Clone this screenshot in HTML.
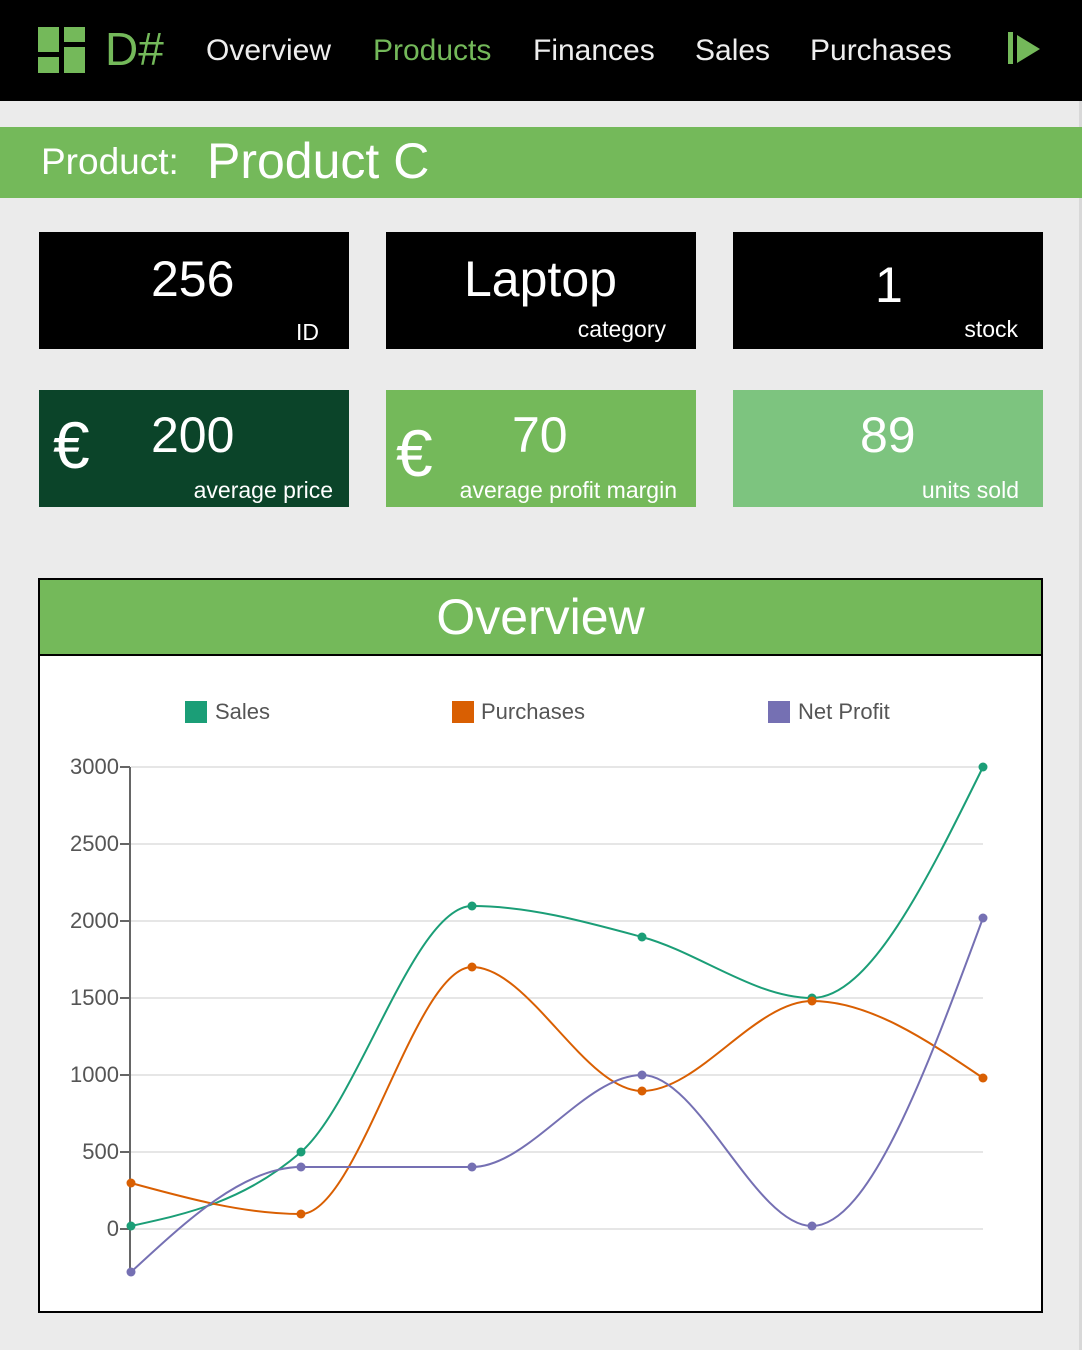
<!DOCTYPE html>
<html><head><meta charset="utf-8"><style>
*{margin:0;padding:0;box-sizing:border-box}
body{width:1082px;height:1350px;background:#ebebeb;font-family:"Liberation Sans",sans-serif;position:relative;overflow:hidden;border-right:3px solid #d8d8d8}
.a{position:absolute}
.nav{left:0;top:0;width:1082px;height:101px;background:#000}
.nl{top:34px;font-size:30px;color:#eee}
.card{position:absolute;width:310px;height:117px;color:#fff}
.v{position:absolute;font-size:50px;line-height:1}
.l{position:absolute;font-size:23px;right:30px;line-height:1}
.eu{position:absolute;left:14px;top:22px;font-size:66px;line-height:1}
</style></head><body>
<div class="a nav"></div>
<div class="a" style="left:38px;top:27px;width:21px;height:25px;background:#74b95a"></div>
<div class="a" style="left:38px;top:57px;width:21px;height:16px;background:#74b95a"></div>
<div class="a" style="left:64px;top:27px;width:21px;height:15px;background:#74b95a"></div>
<div class="a" style="left:64px;top:47px;width:21px;height:26px;background:#74b95a"></div>
<div class="a" style="left:105px;top:26px;font-size:46px;color:#74b95a;line-height:1">D#</div>
<div class="a nl" style="left:206px">Overview</div>
<div class="a nl" style="left:373px;color:#74b95a">Products</div>
<div class="a nl" style="left:533px">Finances</div>
<div class="a nl" style="left:695px">Sales</div>
<div class="a nl" style="left:810px">Purchases</div>
<div class="a" style="left:1008px;top:32px;width:5px;height:32px;background:#74b95a"></div>
<svg class="a" style="left:1017px;top:35px" width="24" height="29"><polygon points="0,0 23,14 0,28" fill="#74b95a"/></svg>
<div class="a" style="left:0;top:127px;width:1082px;height:71px;background:#74b95a"></div>
<div class="a" style="left:41px;top:143px;font-size:37px;color:#fff;line-height:1">Product:</div>
<div class="a" style="left:207px;top:136px;font-size:50px;color:#fff;line-height:1">Product C</div>

<div class="card" style="left:39px;top:232px;background:#000"><div class="v" style="left:112px;top:22px">256</div><div class="l" style="top:89px">ID</div></div>
<div class="card" style="left:386px;top:232px;background:#000"><div class="v" style="left:78px;top:22px">Laptop</div><div class="l" style="top:86px">category</div></div>
<div class="card" style="left:733px;top:232px;background:#000"><div class="v" style="left:142px;top:28px">1</div><div class="l" style="right:25px;top:86px">stock</div></div>

<div class="card" style="left:39px;top:390px;background:#0b4429"><div class="eu">€</div><div class="v" style="left:112px;top:20px">200</div><div class="l" style="right:16px;top:89px">average price</div></div>
<div class="card" style="left:386px;top:390px;background:#74b95a"><div class="eu" style="left:10px;top:30px">€</div><div class="v" style="left:126px;top:20px">70</div><div class="l" style="right:19px;top:89px">average profit margin</div></div>
<div class="card" style="left:733px;top:390px;background:#7dc47f"><div class="v" style="left:127px;top:20px">89</div><div class="l" style="right:24px;top:89px">units sold</div></div>

<div class="a" style="left:38px;top:578px;width:1005px;height:735px;background:#fff;border:2px solid #000"></div>
<div class="a" style="left:40px;top:580px;width:1001px;height:76px;background:#74b95a;border-bottom:2px solid #000;color:#fff;font-size:50px;text-align:center;line-height:74px">Overview</div>

<svg class="a" style="left:0;top:0" width="1082" height="1350" font-family="Liberation Sans, sans-serif">
<rect x="185" y="701" width="22" height="22" fill="#1b9e77"/><text x="215" y="719" font-size="22" fill="#555">Sales</text>
<rect x="452" y="701" width="22" height="22" fill="#d95f02"/><text x="481" y="719" font-size="22" fill="#555">Purchases</text>
<rect x="768" y="701" width="22" height="22" fill="#7570b3"/><text x="798" y="719" font-size="22" fill="#555">Net Profit</text>
<g stroke="#e6e6e6" stroke-width="2">
<line x1="131" y1="767" x2="983" y2="767"/><line x1="131" y1="844" x2="983" y2="844"/><line x1="131" y1="921" x2="983" y2="921"/><line x1="131" y1="998" x2="983" y2="998"/><line x1="131" y1="1075" x2="983" y2="1075"/><line x1="131" y1="1152" x2="983" y2="1152"/><line x1="131" y1="1229" x2="983" y2="1229"/></g>
<g stroke="#666" stroke-width="2"><line x1="130" y1="767" x2="130" y2="1272"/>
<line x1="120" y1="767" x2="130" y2="767"/><line x1="120" y1="844" x2="130" y2="844"/><line x1="120" y1="921" x2="130" y2="921"/><line x1="120" y1="998" x2="130" y2="998"/><line x1="120" y1="1075" x2="130" y2="1075"/><line x1="120" y1="1152" x2="130" y2="1152"/><line x1="120" y1="1229" x2="130" y2="1229"/></g>
<g font-size="22" fill="#555" text-anchor="end">
<text x="119" y="774">3000</text><text x="119" y="851">2500</text><text x="119" y="928">2000</text><text x="119" y="1005">1500</text><text x="119" y="1082">1000</text><text x="119" y="1159">500</text><text x="119" y="1236">0</text></g>
<g id="lines"></g>
</svg>
<script>
var xs=[131,301,472,642,812,983];
var ser=[["#1b9e77",[1226,1152,906,937,998,767]],["#d95f02",[1183,1214,967,1091,1001,1078]],["#7570b3",[1272,1167,1167,1075,1226,918]]];
var g=document.getElementById('lines'),h='';
function sgn(v){return v<0?-1:v>0?1:0}
ser.forEach(function(s){var y=s[1],n=6,m=[],d=[],i;
for(i=0;i<n-1;i++)d.push((y[i+1]-y[i])/(xs[i+1]-xs[i]));
for(i=0;i<n;i++){
 if(i==0||i==n-1){m.push(0);continue;}
 var s0=d[i-1],s1=d[i],h0=xs[i]-xs[i-1],h1=xs[i+1]-xs[i];
 var p=(s0*h1+s1*h0)/(h0+h1);
 m.push((sgn(s0)+sgn(s1))*Math.min(Math.abs(s0),Math.abs(s1),0.5*Math.abs(p))||0);}
var h0=xs[1]-xs[0];m[0]=(3*d[0]-m[1])/2;
m[n-1]=(3*d[n-2]-m[n-2])/2;
var p='M'+xs[0]+','+y[0];
for(i=0;i<n-1;i++){var dx=(xs[i+1]-xs[i])/3;p+=' C'+(xs[i]+dx)+','+(y[i]+m[i]*dx)+' '+(xs[i+1]-dx)+','+(y[i+1]-m[i+1]*dx)+' '+xs[i+1]+','+y[i+1];}
h+='<path d="'+p+'" fill="none" stroke="'+s[0]+'" stroke-width="2"/>';
for(i=0;i<n;i++)h+='<circle cx="'+xs[i]+'" cy="'+y[i]+'" r="4.5" fill="'+s[0]+'"/>';});
g.innerHTML=h;
</script>
</body></html>
